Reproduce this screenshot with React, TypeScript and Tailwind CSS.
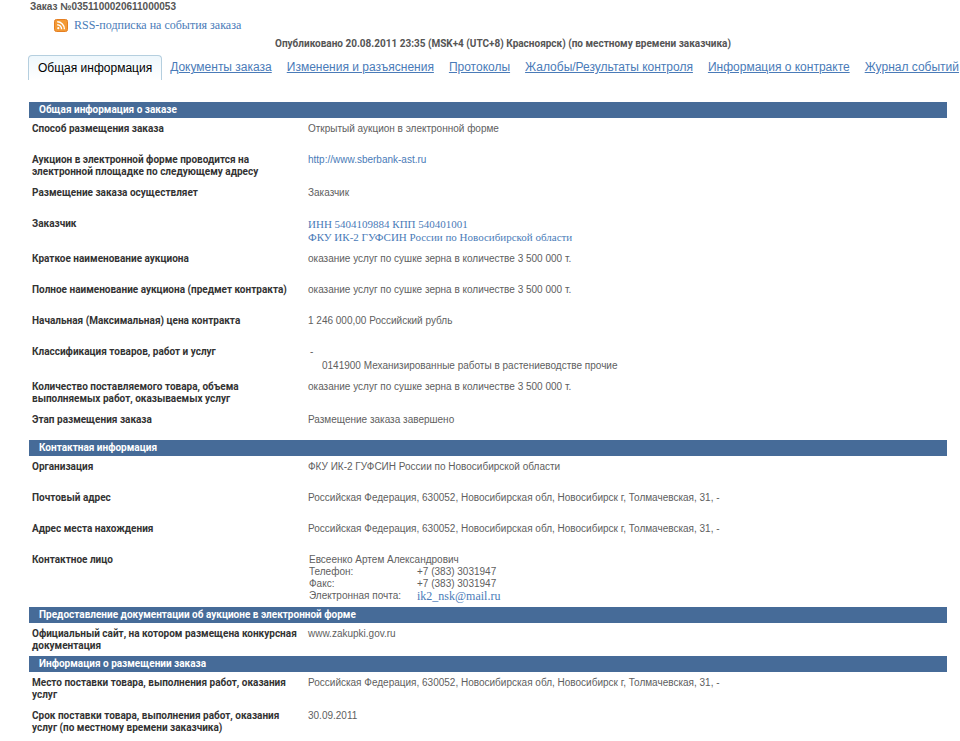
import type { ReactNode } from 'react';

const LINK = 'text-[#4a7bb8] hover:underline';
const SERIF_LINK = `${LINK} font-["Liberation_Serif",serif] leading-[13px]`;
const BOLD = 'font-[Roboto,sans-serif] font-bold';

const tabs = [
  'Документы заказа',
  'Изменения и разъяснения',
  'Протоколы',
  'Жалобы/Результаты контроля',
  'Информация о контракте',
  'Журнал событий',
];

function RssIcon() {
  return (
    <svg width="14" height="13" viewBox="0 0 14 13" aria-hidden="true">
      <rect x="0.5" y="0.5" width="13" height="12" rx="2" fill="#f39a35" stroke="#e57f22" />
      <path d="M3.2 2.8a7.2 7.2 0 0 1 7.2 7.4M3.2 5.7a4.4 4.4 0 0 1 4.4 4.5" fill="none" stroke="#fff" strokeWidth="1.4" />
      <circle cx="4.3" cy="9.2" r="1.1" fill="#fff" />
    </svg>
  );
}

function Section({ title, children }: { title: string; children: ReactNode }) {
  return (
    <section>
      <h2 className={`h-4 bg-[#466b98] pl-[10px] text-[10px] leading-4 text-white ${BOLD}`}>{title}</h2>
      <table className="w-full table-fixed border-collapse">
        <tbody>{children}</tbody>
      </table>
    </section>
  );
}

function Row({ label, children }: { label: string; children: ReactNode }) {
  return (
    <tr className="h-[31px] align-top">
      <th scope="row" className={`w-[279px] pt-[5px] pr-1 pb-1 pl-[3px] text-left text-[#333] ${BOLD}`}>
        {label}
      </th>
      <td className="pt-[5px] pb-1 text-[#606060]">{children}</td>
    </tr>
  );
}

export default function App() {
  const goods = 'оказание услуг по сушке зерна в количестве 3 500 000 т.';
  const address = 'Российская Федерация, 630052, Новосибирская обл, Новосибирск г, Толмачевская, 31, -';

  return (
    <div className='min-h-screen overflow-x-hidden bg-white pl-7 font-["Liberation_Sans",Arial,sans-serif] text-[10px] leading-3'>
      <header className="pt-px">
        <h1 className="pl-[2px] font-bold text-[#555]">Заказ №0351100020611000053</h1>
        <a href="#rss" className={`mt-[6px] ml-[26px] flex w-fit items-center gap-[6px] text-[12px] ${SERIF_LINK}`}>
          <RssIcon />
          RSS-подписка на события заказа
        </a>
        <p className={`mt-[6px] pl-[18px] text-center text-[#555] ${BOLD}`}>
          Опубликовано 20.08.2011 23:35 (MSK+4 (UTC+8) Красноярск) (по местному времени заказчика)
        </p>
      </header>

      <nav className="mt-[5px] flex gap-[15px] text-[12px] leading-[25px] whitespace-nowrap">
        <a
          href="#general"
          aria-current="page"
          className="-mr-[7px] h-[25px] rounded-t border border-b-0 border-[#b5cfdf] bg-linear-to-b from-[#eef7fc] to-white px-[9px] text-black"
        >
          Общая информация
        </a>
        {tabs.map((tab) => (
          <a key={tab} href="#tab" className="text-[#4a7bb8] underline">
            {tab}
          </a>
        ))}
      </nav>

      <main className="mt-[22px] mr-[13px] ml-px">
        <Section title="Общая информация о заказе">
          <Row label="Способ размещения заказа">Открытый аукцион в электронной форме</Row>
          <Row label="Аукцион в электронной форме проводится на электронной площадке по следующему адресу">
            <a href="http://www.sberbank-ast.ru" className={LINK}>
              http://www.sberbank-ast.ru
            </a>
          </Row>
          <Row label="Размещение заказа осуществляет">Заказчик</Row>
          <Row label="Заказчик">
            <a href="#customer" className={`block w-fit text-[11px] ${SERIF_LINK}`}>
              ИНН 5404109884 КПП 540401001
              <br />
              ФКУ ИК-2 ГУФСИН России по Новосибирской области
            </a>
          </Row>
          <Row label="Краткое наименование аукциона">{goods}</Row>
          <Row label="Полное наименование аукциона (предмет контракта)">{goods}</Row>
          <Row label="Начальная (Максимальная) цена контракта">1 246 000,00 Российский рубль</Row>
          <Row label="Классификация товаров, работ и услуг">
            <p className="pl-[2px]">-</p>
            <p className="mt-[2px] pl-[14px]">0141900 Механизированные работы в растениеводстве прочие</p>
          </Row>
          <Row label="Количество поставляемого товара, объема выполняемых работ, оказываемых услуг">{goods}</Row>
          <Row label="Этап размещения заказа">Размещение заказа завершено</Row>
        </Section>

        <Section title="Контактная информация">
          <Row label="Организация">ФКУ ИК-2 ГУФСИН России по Новосибирской области</Row>
          <Row label="Почтовый адрес">{address}</Row>
          <Row label="Адрес места нахождения">{address}</Row>
          <Row label="Контактное лицо">
            <p className="pl-px">Евсеенко Артем Александрович</p>
            <dl className="grid grid-cols-[108px_1fr] pl-px">
              <dt>Телефон:</dt>
              <dd>+7 (383) 3031947</dd>
              <dt>Факс:</dt>
              <dd>+7 (383) 3031947</dd>
              <dt>Электронная почта:</dt>
              <dd>
                <a href="mailto:ik2_nsk@mail.ru" className={`block w-fit text-[12px] ${SERIF_LINK}`}>
                  ik2_nsk@mail.ru
                </a>
              </dd>
            </dl>
          </Row>
        </Section>

        <Section title="Предоставление документации об аукционе в электронной форме">
          <Row label="Официальный сайт, на котором размещена конкурсная документация">www.zakupki.gov.ru</Row>
        </Section>

        <Section title="Информация о размещении заказа">
          <Row label="Место поставки товара, выполнения работ, оказания услуг">{address}</Row>
          <Row label="Срок поставки товара, выполнения работ, оказания услуг (по местному времени заказчика)">
            30.09.2011
          </Row>
        </Section>
      </main>
    </div>
  );
}
